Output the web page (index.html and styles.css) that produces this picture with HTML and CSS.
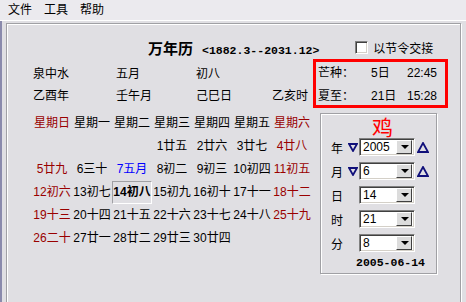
FILE: index.html
```html
<!DOCTYPE html>
<html lang="zh-CN">
<head>
 <meta charset="UTF-8">
 <title>万年历</title>
 <link rel="stylesheet" href="styles.css">
</head>
<body>
 <div class="menubar">
   <span>文件</span>
   <span>工具</span>
   <span>帮助</span>
 </div>

 <div class="client">
   <div class="panel">
     <div class="head">
       <span class="title">万年历</span>
       <span class="range">&lt;1882.3--2031.12&gt;</span>
       <label class="check"><span class="box"></span>以节令交接</label>
     </div>

     <div class="main">
       <div class="left">
         <div class="info">
           <span>泉中水</span><span>五月</span><span>初八</span><span></span>
           <span>乙酉年</span><span>壬午月</span><span>己巳日</span><span>乙亥时</span>
         </div>

         <div class="cal">
           <div class="wk red">星期日</div>
           <div class="wk">星期一</div>
           <div class="wk">星期二</div>
           <div class="wk">星期三</div>
           <div class="wk">星期四</div>
           <div class="wk">星期五</div>
           <div class="wk red">星期六</div>

           <div></div><div></div><div></div>
           <div>1廿五</div><div>2廿六</div><div>3廿七</div><div class="red">4廿八</div>

           <div class="red">5廿九</div><div>6三十</div><div class="blue">7五月</div><div>8初二</div>
           <div>9初三</div><div>10初四</div><div class="red">11初五</div>

           <div class="red">12初六</div><div>13初七</div><div class="sel">14初八</div><div>15初九</div>
           <div>16初十</div><div>17十一</div><div class="red">18十二</div>

           <div class="red">19十三</div><div>20十四</div><div>21十五</div><div>22十六</div>
           <div>23十七</div><div>24十八</div><div class="red">25十九</div>

           <div class="red">26二十</div><div>27廿一</div><div>28廿二</div><div>29廿三</div>
           <div>30廿四</div>
         </div>
       </div>

       <div class="right">
         <div class="term">
           <div class="term-row"><span>芒种：</span><span>5日</span><span>22:45</span></div>
           <div class="term-row"><span>夏至：</span><span>21日</span><span>15:28</span></div>
         </div>

         <div class="group">
           <div class="zodiac">鸡</div>

           <div class="row">
             <span class="lbl">年</span>
             <span class="dn"><svg width="10" height="9" viewBox="0 0 10 9"><polygon points="1,1 9,1 5,8" fill="none" stroke="#10107a" stroke-width="1.8"/></svg></span>
             <div class="combo"><span>2005</span><i class="btn"></i></div>
             <span class="up"><svg width="12" height="11" viewBox="0 0 12 11"><polygon points="6,1 11,10 1,10" fill="none" stroke="#10107a" stroke-width="1.8"/></svg></span>
           </div>

           <div class="row">
             <span class="lbl">月</span>
             <span class="dn"><svg width="10" height="9" viewBox="0 0 10 9"><polygon points="1,1 9,1 5,8" fill="none" stroke="#10107a" stroke-width="1.8"/></svg></span>
             <div class="combo"><span>6</span><i class="btn"></i></div>
             <span class="up"><svg width="12" height="11" viewBox="0 0 12 11"><polygon points="6,1 11,10 1,10" fill="none" stroke="#10107a" stroke-width="1.8"/></svg></span>
           </div>

           <div class="row">
             <span class="lbl">日</span>
             <span class="dn"></span>
             <div class="combo"><span>14</span><i class="btn"></i></div>
           </div>

           <div class="row">
             <span class="lbl">时</span>
             <span class="dn"></span>
             <div class="combo"><span>21</span><i class="btn"></i></div>
           </div>

           <div class="row">
             <span class="lbl">分</span>
             <span class="dn"></span>
             <div class="combo"><span>8</span><i class="btn"></i></div>
           </div>

           <div class="date">2005-06-14</div>
         </div>
       </div>
     </div>
   </div>
 </div>
</body>
</html>
```

FILE: styles.css
```css
body {
margin: 0;
height: 302px;
background: #e0dfe3;
color: #000;
font-family: 'Liberation Sans', 'Noto Sans CJK SC', sans-serif;
font-size: 12px;
overflow: hidden;
}
.menubar {
display: flex;
gap: 12px;
height: 20px;
line-height: 21px;
padding-left: 8px;
background: #ebeaee;
border-bottom: 1px solid #fff;
}
.client {
border-left: 2px solid #8a8aac;
padding: 2px 0 0 4px;
height: 279px;
overflow: hidden;
}
.panel {
width: 453px;
height: 290px;
border: 1px solid #a0a0a4;
box-shadow: inset 1px 1px 0 #fff, 1px 1px 0 #fff;
}
.head {
display: flex;
align-items: baseline;
height: 35px;
box-sizing: border-box;
padding: 15px 0 0 141px;
}
.title {
font-size: 15px;
font-weight: bold;
line-height: 18px;
}
.range {
margin-left: 9px;
font-family: 'Liberation Mono', monospace;
font-size: 11.5px;
font-weight: bold;
}
.check {
display: inline-flex;
align-items: center;
gap: 5px;
margin-left: 36px;
}
.box {
display: inline-block;
width: 11px;
height: 11px;
background: #fff;
border: 1px solid;
border-color: #808080 #fff #fff #808080;
box-shadow: inset 1px 1px 0 #404040, inset -1px -1px 0 #d4d0c8;
}
.main {
display: flex;
}
.left {
width: 306px;
box-sizing: border-box;
padding-left: 25px;
}
.info {
display: grid;
grid-template-columns: 83px 80px 76px auto;
padding: 4px 0 0 1px;
line-height: 22px;
}
.cal {
display: grid;
grid-template-columns: repeat(7, 40px);
grid-auto-rows: 23px;
margin-top: 5px;
line-height: 23px;
text-align: center;
}
.sel {
font-weight: bold;
box-sizing: border-box;
line-height: 21px;
border: 1px solid;
border-color: #a0a0a4 #fff #fff #a0a0a4;
}
.red {
color: #990000;
}
.blue {
color: #0000ff;
}
.right {
width: 135px;
}
.term {
height: 49px;
box-sizing: border-box;
border: 3px solid #ff0000;
padding-left: 2px;
}
.term-row {
display: grid;
grid-template-columns: 53px 36px auto;
line-height: 23px;
}
.group {
width: 115px;
height: 159px;
margin: 5px 0 0 7px;
border: 1px solid #a0a0a4;
box-shadow: inset 1px 1px 0 #fff, 1px 1px 0 #fff;
}
.zodiac {
padding-left: 51px;
color: #ff0000;
font-family: 'Noto Sans CJK SC', sans-serif;
font-size: 21px;
line-height: 24px;
}
.row {
display: flex;
align-items: center;
height: 18px;
margin-bottom: 6px;
padding-left: 10px;
}
.lbl {
width: 17px;
}
.dn {
display: flex;
width: 11px;
}
.up {
display: flex;
margin-left: 2px;
}
.combo {
display: flex;
align-items: center;
justify-content: space-between;
width: 56px;
height: 18px;
box-sizing: border-box;
background: #fff;
border: 1px solid;
border-color: #808080 #fff #fff #808080;
box-shadow: inset 1px 1px 0 #404040, inset -1px -1px 0 #d4d0c8;
padding: 2px 2px 2px 3px;
}
.btn {
position: relative;
width: 16px;
height: 14px;
box-sizing: border-box;
background: #dcdcdc;
border: 1px solid;
border-color: #fff #404040 #404040 #fff;
}
.btn::after {
content: '';
position: absolute;
left: 4px;
top: 4px;
border-left: 4px solid transparent;
border-right: 4px solid transparent;
border-top: 4px solid #000;
}
.date {
padding-left: 35px;
margin-top: -3px;
font-family: 'Liberation Mono', monospace;
font-size: 11.5px;
font-weight: bold;
line-height: 16px;
}
```
